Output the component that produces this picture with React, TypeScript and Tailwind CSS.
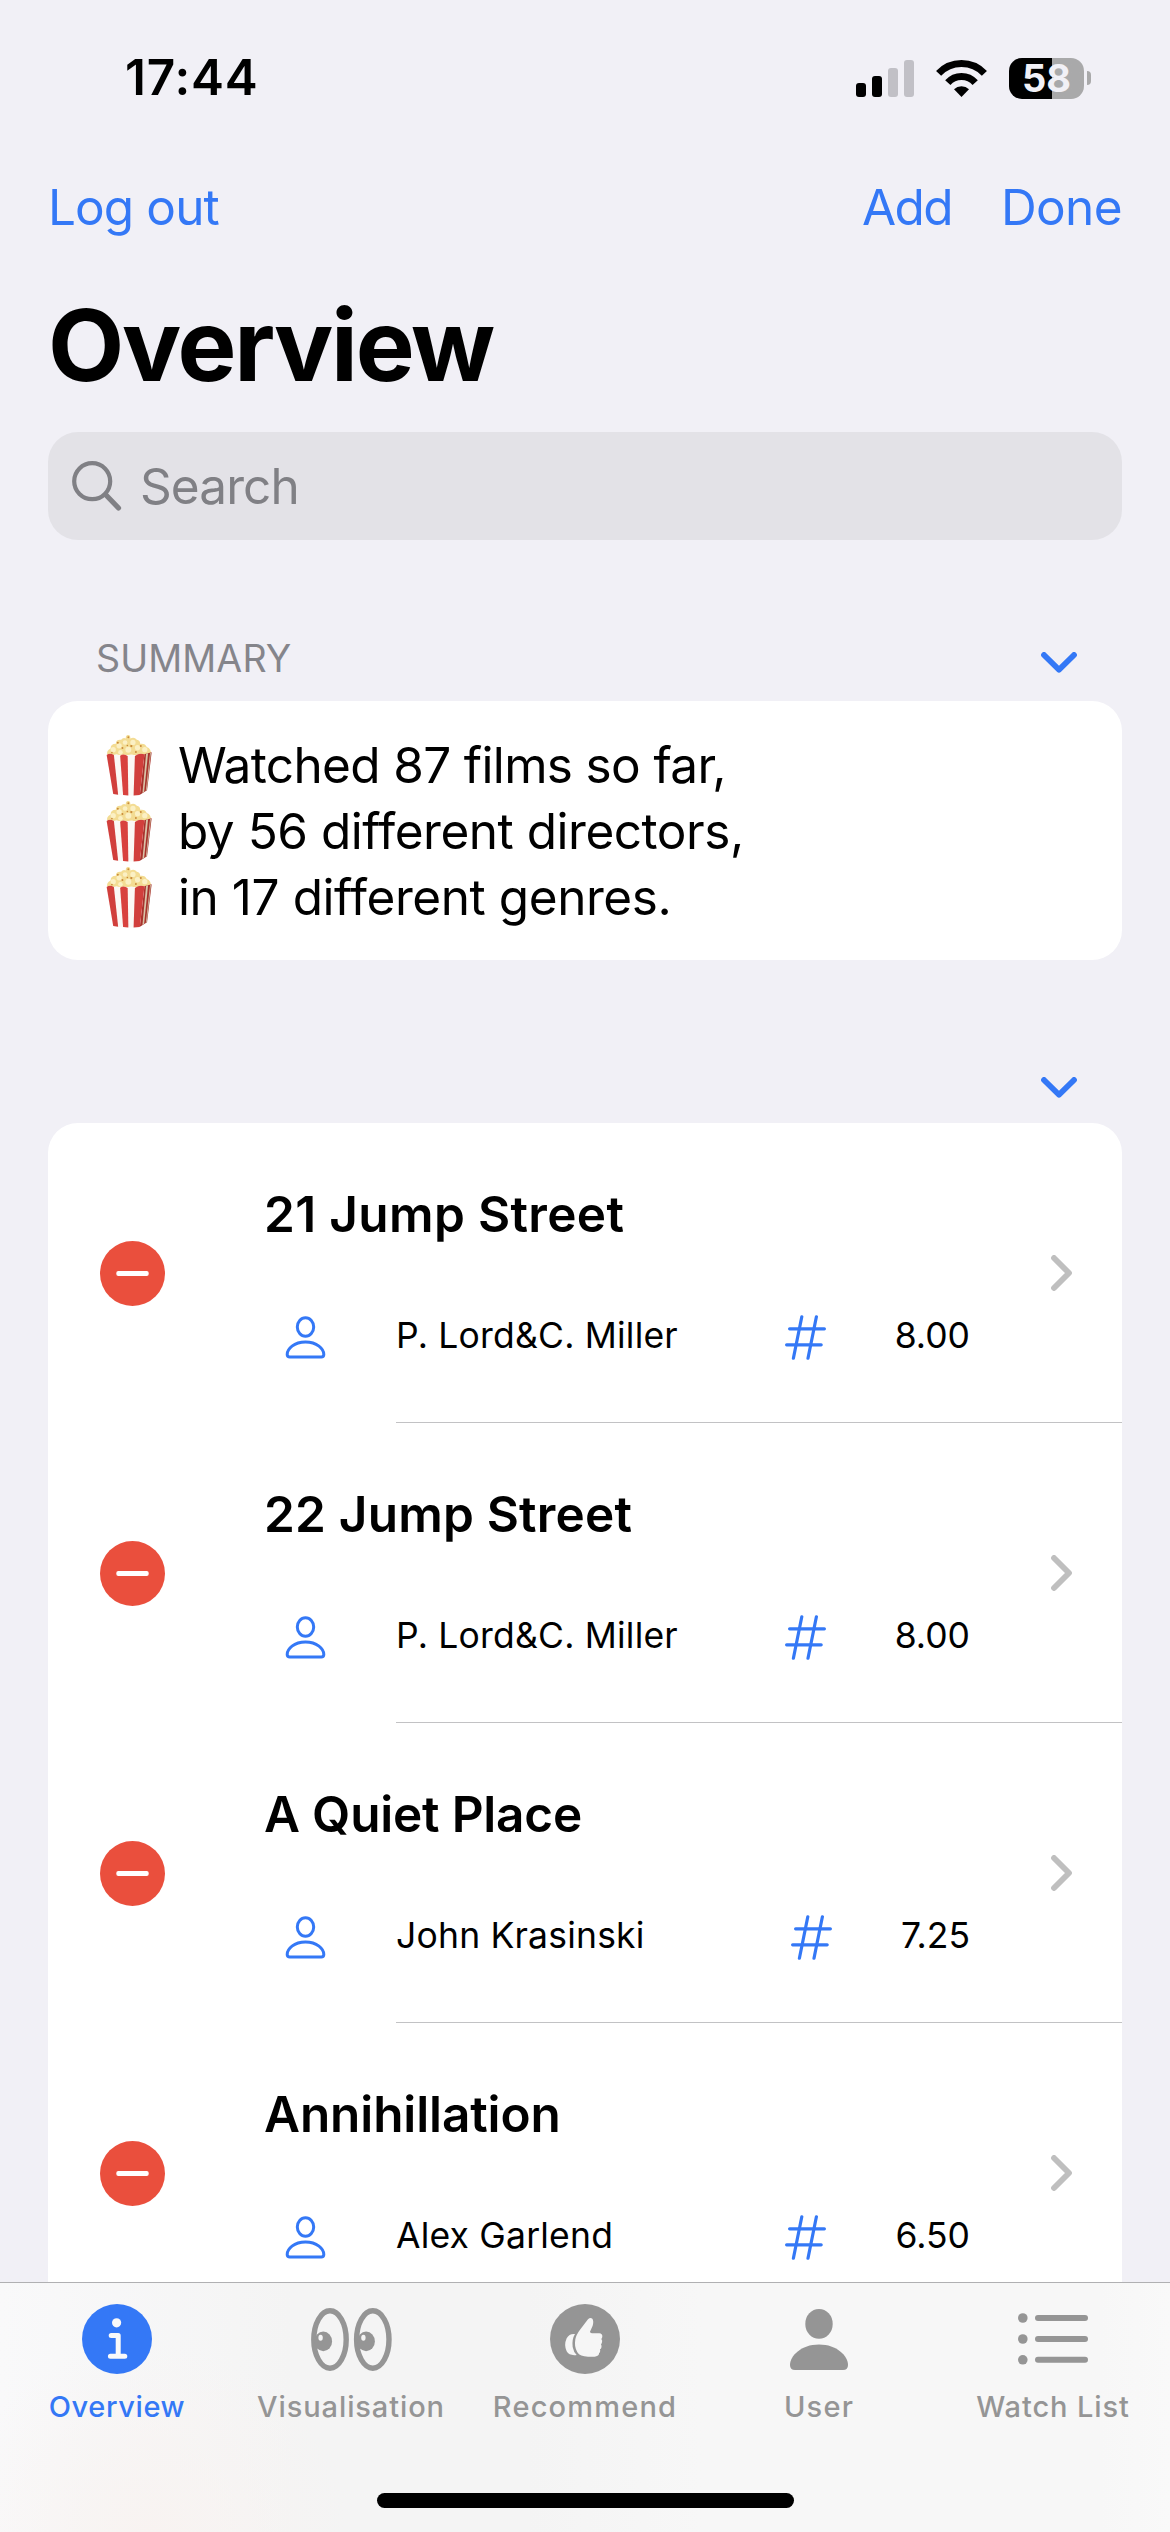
import type { ReactNode } from 'react';
import clsx from 'clsx';

interface Film {
  title: string;
  director: string;
  rating: string;
  tracking: string;
}

interface Tab {
  label: string;
  icon: ReactNode;
  tracking: string;
  active?: boolean;
}

const films: Film[] = [
  { title: '21 Jump Street', director: 'P. Lord&C. Miller', rating: '8.00', tracking: 'tracking-[0.35px]' },
  { title: '22 Jump Street', director: 'P. Lord&C. Miller', rating: '8.00', tracking: 'tracking-[0.2px]' },
  { title: 'A Quiet Place', director: 'John Krasinski', rating: '7.25', tracking: 'tracking-[-0.2px]' },
  { title: 'Annihillation', director: 'Alex Garlend', rating: '6.50', tracking: 'tracking-[-0.1px]' },
];

const summary = [
  { text: 'Watched 87 films so far,', tracking: 'tracking-[-0.65px]' },
  { text: 'by 56 different directors,', tracking: 'tracking-[-0.47px]' },
  { text: 'in 17 different genres.', tracking: 'tracking-[-0.43px]' },
];

const tabs: Tab[] = [
  { label: 'Overview', icon: <InfoIcon />, tracking: 'tracking-[0.6px]', active: true },
  { label: 'Visualisation', icon: <EyesIcon />, tracking: 'tracking-[0.9px]' },
  { label: 'Recommend', icon: <ThumbIcon />, tracking: 'tracking-[1.2px]' },
  { label: 'User', icon: <UserIcon />, tracking: 'tracking-[1.2px]' },
  { label: 'Watch List', icon: <ListIcon />, tracking: 'tracking-[0.9px]' },
];

function SignalIcon() {
  return (
    <svg width="58" height="37" viewBox="0 0 58 37">
      <rect x="0" y="23" width="10" height="14" rx="3" fill="#000" />
      <rect x="16" y="16" width="10" height="21" rx="3" fill="#000" />
      <rect x="32" y="8" width="10" height="29" rx="3" fill="#c1c0c6" />
      <rect x="48" y="0" width="10" height="37" rx="3" fill="#c1c0c6" />
    </svg>
  );
}

function WifiIcon() {
  return (
    <svg width="51" height="37" viewBox="0 0 51 37" fill="none">
      <path d="M2.6 13.4 A31.5 31.5 0 0 1 48.4 13.4" stroke="#000" strokeWidth="7" />
      <path d="M11.8 22.6 A18.2 18.2 0 0 1 39.2 22.6" stroke="#000" strokeWidth="7" />
      <path d="M18 29.2 A10.8 10.8 0 0 1 33 29.2 L25.5 37 Z" fill="#000" />
    </svg>
  );
}

function SearchIcon() {
  return (
    <svg width="50" height="50" viewBox="0 0 50 50" fill="none" stroke="#808085" strokeLinecap="round">
      <circle cx="20.2" cy="20.2" r="18" strokeWidth="4.2" />
      <path d="M33.5 33.5 L46.5 47" strokeWidth="5.2" />
    </svg>
  );
}

function ChevronDown() {
  return (
    <svg width="36" height="21" viewBox="0 0 36 21" fill="none">
      <path d="M3 3 L18 17.8 L33 3" stroke="#3478f6" strokeWidth="5.8" strokeLinecap="round" strokeLinejoin="round" />
    </svg>
  );
}

function ChevronRight() {
  return (
    <svg width="21" height="36" viewBox="0 0 21 36" fill="none">
      <path d="M3 3 L18 18 L3 33" stroke="#bfbfbf" strokeWidth="5.8" strokeLinecap="round" strokeLinejoin="round" />
    </svg>
  );
}

function PopcornIcon() {
  return (
    <svg width="46" height="62" viewBox="18 11 140 187">
      {/* popped kernels */}
      <path
        d="M22 74 Q18 60 32 54 Q32 40 48 40 Q48 26 64 28 Q70 20 78 24 Q78 12 86 13 Q93 14 92 24 Q104 18 112 28 Q122 30 122 40 Q138 38 142 50 Q156 54 155 74 Z"
        fill="#f3dc93"
      />
      <g fill="#fbf0c4">
        <circle cx="40" cy="58" r="8" />
        <circle cx="58" cy="46" r="8" />
        <circle cx="76" cy="36" r="7" />
        <circle cx="100" cy="36" r="8" />
        <circle cx="86" cy="58" r="9" />
        <circle cx="114" cy="52" r="8" />
        <circle cx="136" cy="58" r="8" />
        <circle cx="62" cy="66" r="7" />
      </g>
      <g fill="#c98a3a">
        <circle cx="86" cy="20" r="3" />
        <circle cx="54" cy="37" r="3" />
        <circle cx="68" cy="53" r="3" />
        <circle cx="95" cy="47" r="3.5" />
        <circle cx="83" cy="45" r="2.5" />
        <circle cx="124" cy="47" r="3" />
        <circle cx="36" cy="67" r="2.5" />
        <circle cx="109" cy="65" r="3" />
      </g>
      {/* side of the box */}
      <path d="M134 72 L157 66 L143 181 L120 196 Z" fill="#a8322c" />
      <path d="M140 70 L146 69 L134 187 L129 190 Z" fill="#d9c3a8" />
      <path d="M152 68 L155 67 L142 182 L139 184 Z" fill="#cbb096" />
      {/* striped front */}
      <path d="M20 74 Q30 66 42 74 Q52 68 61 76 Q72 68 84 77 Q95 68 106 77 Q120 66 135 72 L121 196 Q80 199 40 193 Z" fill="#fbf8f5" />
      <path d="M20 74 Q30 66 42 74 L55 195 L40 193 Z" fill="#d13f3c" />
      <path d="M61 76 Q72 68 84 77 L86 197 L70 196 Z" fill="#d8423e" />
      <path d="M106 77 Q120 66 135 72 L121 196 L102 197 Z" fill="#d13f3c" />
    </svg>
  );
}

function MinusIcon() {
  return (
    <svg width="65" height="65" viewBox="0 0 65 65">
      <circle cx="32.5" cy="32.5" r="32.5" fill="#ea4f3d" />
      <rect x="16.3" y="30" width="32.4" height="5" rx="2" fill="#fff" />
    </svg>
  );
}

function PersonIcon() {
  return (
    <svg width="41" height="43" viewBox="0 0 41 43" fill="none" stroke="#3478f6" strokeWidth="3">
      <ellipse cx="20.5" cy="11" rx="8.2" ry="9.2" />
      <path d="M4.8 41 Q2.2 41 2.2 38.4 C2.2 33 9 26 20.5 26 S38.8 33 38.8 38.4 Q38.8 41 36.2 41 Z" />
    </svg>
  );
}

function HashIcon() {
  return (
    <svg width="41" height="45" viewBox="0 0 41 45" fill="none" stroke="#3478f6" strokeWidth="3.2" strokeLinecap="round">
      <path d="M16.8 1.8 L8.4 43.2 M31.4 1.8 L23 43.2" />
      <path d="M4.6 13.8 H39.4 M1.6 29.8 H36.2" />
    </svg>
  );
}

function InfoIcon() {
  return (
    <svg width="70" height="70" viewBox="0 0 70 70" fill="none">
      <circle cx="35" cy="35" r="35" fill="#3478f6" />
      <circle cx="34.6" cy="18.8" r="4.6" fill="#f9f9f9" />
      <path d="M29.2 31.5 H36.2 V52.3 M28.4 52.3 H42.8" stroke="#f9f9f9" strokeWidth="5" strokeLinecap="round" strokeLinejoin="round" />
    </svg>
  );
}

function EyesIcon() {
  return (
    <svg width="81" height="63" viewBox="0 0 81 63" fill="none">
      {[19, 61.8].map((cx) => (
        <g key={cx}>
          <ellipse cx={cx} cy="31.5" rx="16.2" ry="28.7" stroke="#959595" strokeWidth="5.4" />
          <ellipse cx={cx - 6.7} cy="33.4" rx="8.8" ry="9.8" fill="#959595" />
          <ellipse cx={cx - 9.4} cy="29.8" rx="2.2" ry="3" fill="#f5f5f5" />
        </g>
      ))}
    </svg>
  );
}

function ThumbIcon() {
  return (
    <svg width="70" height="70" viewBox="26 27 210 210">
      <circle cx="131" cy="132" r="105" fill="#959595" />
      <path
        d="M140 73 Q147 66 153 71 Q158 78 154 92 L146 110 Q147 115 153 115 H174 Q183 116 183 124 Q183 129 180 132 Q184 137 182 142 Q181 146 179 148 Q182 153 180 158 Q179 162 176 163 Q178 168 175 173 Q172 173 173 177 Q171 184 160 185 H140 Q116 185 108 172 Q98 156 102 133 Q104 120 116 104 Z"
        fill="#f6f6f6"
      />
      <path d="M101 117 Q84 115 76 130 Q67 150 76 169 Q84 183 106 180 Q97 172 94 156 Q91 133 101 117 Z" fill="#f6f6f6" />
    </svg>
  );
}

function UserIcon() {
  return (
    <svg width="58" height="61" viewBox="0 0 58 61" fill="#959595">
      <ellipse cx="29" cy="14.9" rx="13.7" ry="14.9" />
      <path d="M5 61 Q0 61 0 56 C0 47 11 35.5 29 35.5 S58 47 58 56 Q58 61 53 61 Z" />
    </svg>
  );
}

function ListIcon() {
  return (
    <svg width="70" height="52" viewBox="0 0 70 52" fill="#959595">
      {[5, 26, 46.8].map((cy) => (
        <g key={cy}>
          <circle cx="4.8" cy={cy} r="4.8" />
          <rect x="17" y={cy - 3} width="53" height="6" rx="3" />
        </g>
      ))}
    </svg>
  );
}

function StatusBar() {
  return (
    <div className="flex h-[156px] items-center justify-between pr-[79px] pl-[125px]">
      <span className="text-[49.5px] leading-none font-semibold tracking-[0.8px]">17:44</span>
      <div className="flex items-center">
        <SignalIcon />
        <div className="ml-[22px]">
          <WifiIcon />
        </div>
        <div className="ml-[22px] flex h-[41px] w-[75px] items-center justify-center rounded-[13px] bg-linear-to-r from-black from-57% to-[#a9a9aa] to-57% text-[38px] leading-none font-bold text-[#f1f0f6]">
          58
        </div>
        <div className="ml-[3px] h-[14px] w-1 rounded-r-full bg-[#a9a9aa]" />
      </div>
    </div>
  );
}

function FilmRow({ film }: { film: Film }) {
  return (
    <li>
      <div className="flex h-[299px] items-center pt-px pr-[50px] pl-[52px]">
        <button className="shrink-0">
          <MinusIcon />
        </button>
        <div className="mt-1 ml-[99px] flex w-[706px] flex-col gap-[62px]">
          <h2 className={clsx('h-[60px] text-[49.5px] leading-[60px] font-semibold', film.tracking)}>{film.title}</h2>
          <div className="flex h-[60px] items-center text-[35.5px] leading-[60px] whitespace-nowrap">
            <div className="mt-0.5 ml-[21px] w-[111px]">
              <PersonIcon />
            </div>
            <span className="flex-1 tracking-[0.2px]">{film.director}</span>
            <div className="mt-0.5">
              <HashIcon />
            </div>
            <span className="ml-[69px]">{film.rating}</span>
          </div>
        </div>
        <div className="ml-auto">
          <ChevronRight />
        </div>
      </div>
      <div className="ml-[348px] h-px bg-[#c2c2c4]" />
    </li>
  );
}

function TabBar() {
  return (
    <nav className="h-[250px] shrink-0 border-t border-[#b0b0b2] bg-[#f6f6f6] bg-[radial-gradient(ellipse_200px_190px_at_150px_250px,#f8f3f1,transparent),linear-gradient(to_right,#f9f9fa,#f4f4f4_25%,#f4f4f4_45%,#f7f7f7_60%,#f7f7f7_94%,#f9f9f9)]">
      <div className="flex justify-between">
        {tabs.map(({ label, icon, tracking, active }) => (
          <button
            key={label}
            className={clsx('flex w-[234px] flex-col items-center', active ? 'text-[#3478f6]' : 'text-[#959595]')}
          >
            <span className="mt-5 flex h-[72px] items-center">{icon}</span>
            <span className={clsx('mt-[12px] text-[29px] leading-[40px] font-medium', tracking)}>{label}</span>
          </button>
        ))}
      </div>
      <div className="mx-auto mt-[66px] h-[15px] w-[417px] rounded-full bg-black" />
    </nav>
  );
}

export default function App() {
  return (
    <div className="flex h-[2532px] w-[1170px] flex-col overflow-hidden bg-[#f1f0f6] font-[Inter,sans-serif] text-black">
      <StatusBar />

      <header className="flex h-[104px] items-center px-12 text-[49.5px] leading-none text-[#3478f6]">
        <button className="tracking-[-0.9px]">Log out</button>
        <button className="ml-auto tracking-[-1.6px]">Add</button>
        <button className="ml-[49px] tracking-[-0.6px]">Done</button>
      </header>

      <main className="min-h-0 flex-1 overflow-hidden px-12">
        <h1 className="mb-[2px] text-[99px] leading-[170px] font-bold tracking-[-2.2px]">Overview</h1>

        <div className="flex h-[108px] items-center gap-[18px] rounded-[30px] bg-[#e3e2e7] pl-6 text-[49.5px] tracking-[-0.9px] text-[#808085]">
          <SearchIcon />
          <span>Search</span>
        </div>

        <div className="mt-[77px] flex h-[84px] items-center justify-between pr-[45px] pl-12">
          <span className="text-[37.6px] tracking-[0.1px] text-[#85858b]">SUMMARY</span>
          <div className="mt-[7px]">
            <ChevronDown />
          </div>
        </div>
        <section className="h-[259px] rounded-[30px] bg-white pt-[31px] pl-[58px]">
          {summary.map(({ text, tracking }) => (
            <p key={text} className={clsx('flex h-[66px] items-center gap-[26px] text-[49.5px] leading-[66px]', tracking)}>
              <PopcornIcon />
              {text}
            </p>
          ))}
        </section>

        <div className="mt-[92px] flex h-[71px] items-center justify-end pr-[45px]">
          <ChevronDown />
        </div>
        <ul className="rounded-t-[30px] bg-white">
          {films.map((film) => (
            <FilmRow key={film.title} film={film} />
          ))}
        </ul>
      </main>

      <TabBar />
    </div>
  );
}
